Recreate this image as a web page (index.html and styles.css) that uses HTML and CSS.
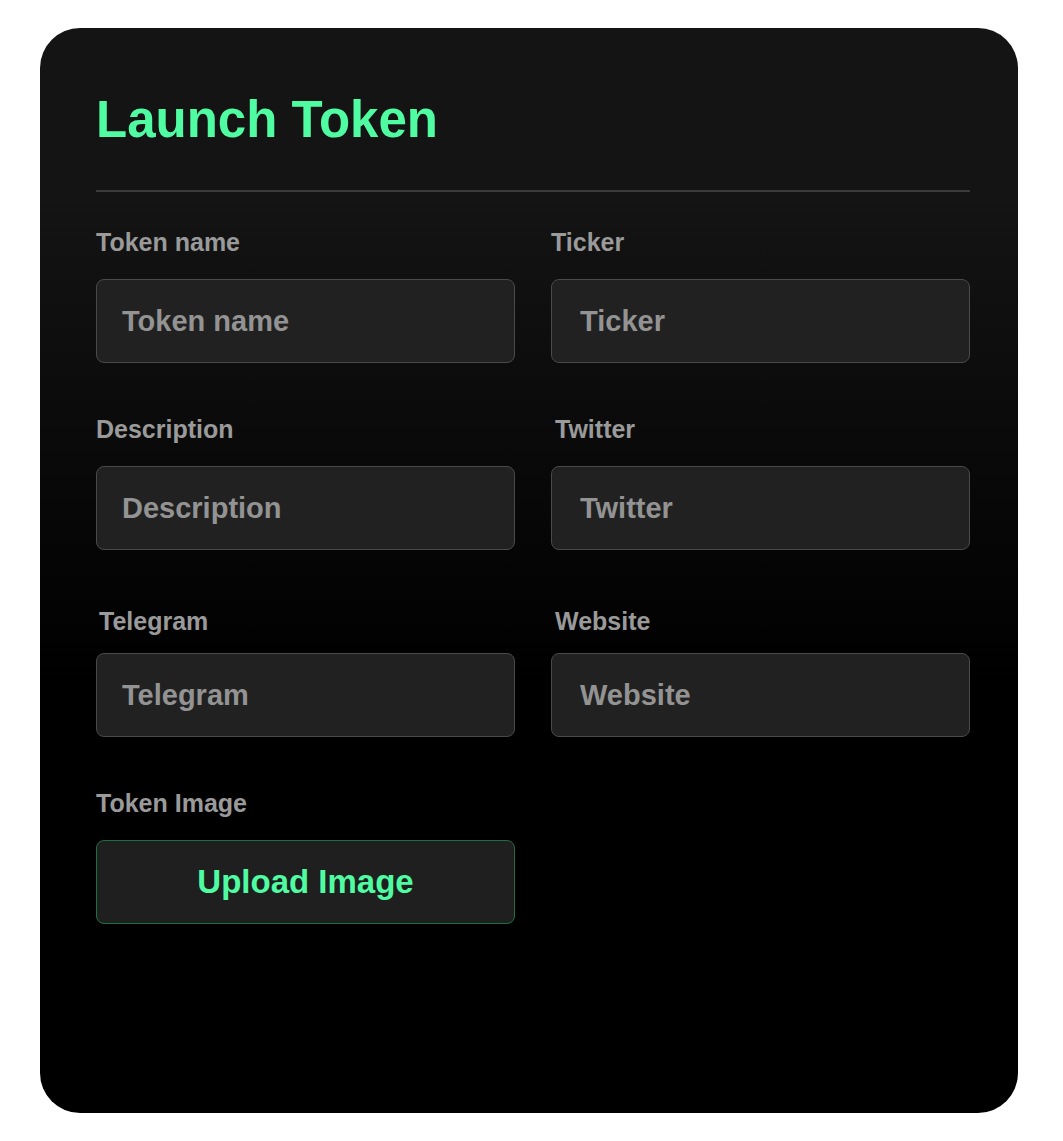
FILE: index.html
```html
<!DOCTYPE html>
<html>
    <head>
        <title>Launch Token</title>
        <meta charset="UTF-8">
        <meta name="viewport" content="width=device-width, initial-scale=1.0">
        <link rel="stylesheet" href="styles.css">
    </head>
    <body>
        <div class="card">
            <h1>Launch Token</h1>
            <div class="divider"></div>
            <form class="form-grid">
                <div class="form-item">
                    <label for="name" class="form-label">Token name</label>
                    <input id="name" type="text" placeholder="Token name"/>
                </div>
                <div class="form-item">
                    <label for="ticker" class="form-label">Ticker</label>
                    <input id="ticker" class="right" type="text" placeholder="Ticker"/>
                </div>
                <div class="form-item">
                    <label for="desc" class="form-label">Description</label>
                    <input id="desc" type="text" placeholder="Description"/>
                </div>
                <div class="form-item">
                    <label for="twitter" class="form-label shifted">Twitter</label>
                    <input id="twitter" class="right" type="text" placeholder="Twitter"/>
                </div>
                <div class="form-item">
                    <label for="telegram" class="form-label low">Telegram</label>
                    <input id="telegram" type="text" placeholder="Telegram"/>
                </div>
                <div class="form-item">
                    <label for="website" class="form-label low shifted">Website</label>
                    <input id="website" class="right" type="text" placeholder="Website"/>
                </div>
                <div class="form-item">
                    <div class="form-label">Token Image</div>
                    <button type="button" class="upload-btn">Upload Image</button>
                </div>
            </form>
        </div>
    </body>
</html>
```
FILE: styles.css
```css
body{
    margin: 28px 45px 28px 40px;
    background-color: white;
    font-family: "Liberation Sans", Arial, sans-serif;
}
.card{
    width: 978px;
    height: 1085px;
    box-sizing: border-box;
    padding: 62px 48px 0px 56px;
    border-radius: 40px;
    background: linear-gradient(180deg, #141414 15%, #000000 60%);
}
h1{
    margin: 0px;
    font-size: 51px;
    line-height: 60px;
    font-weight: bold;
    color: #50fca2;
}
.divider{
    height: 2px;
    margin-top: 40px;
    background-color: #3c3c3c;
}
.form-grid{
    display: grid;
    grid-template-columns: 419px 419px;
    column-gap: 36px;
    row-gap: 52px;
    margin-top: 36px;
}
.form-label{
    display: block;
    font-size: 25px;
    line-height: 28px;
    font-weight: bold;
    color: #9a9a9a;
    margin-bottom: 23px;
}
.form-label.low{
    margin-top: 5px;
    margin-bottom: 18px;
    padding-left: 3px;
}
.form-label.shifted{
    padding-left: 4px;
}
.form-item input[type="text"]{
    display: block;
    width: 100%;
    height: 84px;
    box-sizing: border-box;
    padding: 0px 25px;
    font-family: "Liberation Sans", Arial, sans-serif;
    font-size: 29px;
    font-weight: bold;
    color: #cccccc;
    background-color: #212121;
    border: 1px solid #4a4a4a;
    border-radius: 8px;
    outline: none;
}
.form-item input.right{
    padding-left: 28px;
}
.form-item input::placeholder{
    color: #939393;
}
.upload-btn{
    display: block;
    width: 100%;
    height: 84px;
    font-family: "Liberation Sans", Arial, sans-serif;
    font-size: 33px;
    font-weight: bold;
    color: #50fca2;
    background-color: #1f1f1f;
    border: 1px solid #1d7046;
    border-radius: 8px;
    cursor: pointer;
}
```
